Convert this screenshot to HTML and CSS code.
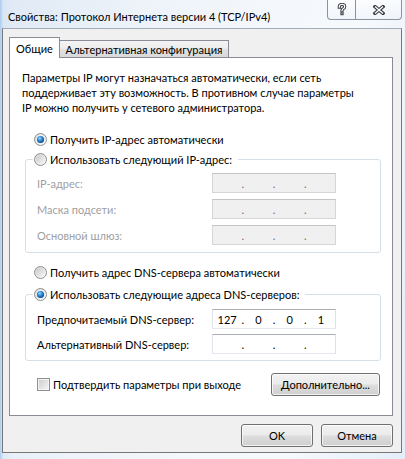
FILE: index.html
```html
<!DOCTYPE html>
<html lang="ru">
<head>
<meta charset="utf-8">
<title>Свойства: Протокол Интернета версии 4 (TCP/IPv4)</title>
<link rel="stylesheet" href="styles.css">
</head>
<body>
<div class="window">
  <div class="titlebar">
    <div class="title">Свойства: Протокол Интернета версии 4 (TCP/IPv4)</div>
    <div class="caption">
      <div class="cbtn help">
        <svg width="10" height="13" viewBox="0 0 10 13">
          <path d="M2.3 4.2 V3.4 Q2.3 1.4 5 1.4 Q7.7 1.4 7.7 3.4 Q7.7 4.9 6.2 5.7 Q5 6.3 5 7.4 V7.9" fill="none" stroke="#3a3d42" stroke-width="3.2" stroke-linecap="square"/>
          <rect x="3.4" y="9.4" width="3.2" height="2.8" fill="#3a3d42"/>
          <path d="M2.3 4.2 V3.4 Q2.3 1.4 5 1.4 Q7.7 1.4 7.7 3.4 Q7.7 4.9 6.2 5.7 Q5 6.3 5 7.4 V7.9" fill="none" stroke="#ffffff" stroke-width="1.2" stroke-linecap="square"/>
          <rect x="4.4" y="10.4" width="1.2" height="0.8" fill="#ffffff"/>
        </svg>
      </div>
      <div class="cbtn close">
        <svg width="12" height="10" viewBox="0 0 12 10">
          <path d="M2 1.6 L10 8.4 M10 1.6 L2 8.4" stroke="#3a3d42" stroke-width="3.4" stroke-linecap="square"/>
          <path d="M2 1.6 L10 8.4 M10 1.6 L2 8.4" stroke="#ffffff" stroke-width="1.3" stroke-linecap="butt"/>
        </svg>
      </div>
    </div>
  </div>

  <div class="client">
    <div class="tabs">
      <div class="tab active">Общие</div>
      <div class="tab inactive">Альтернативная конфигурация</div>
    </div>

    <div class="panel">
      <p class="intro">Параметры IP могут назначаться автоматически, если сеть<br>поддерживает эту возможность. В противном случае параметры<br>IP можно получить у сетевого администратора.</p>

      <div class="option first">
        <svg class="radio" width="13" height="13" viewBox="0 0 13 13"><circle cx="6.5" cy="6.5" r="6" fill="url(#radioBg)" stroke="#8e8f8f"/><circle cx="6.5" cy="6.5" r="4.2" fill="none" stroke="#f4f4f4" stroke-width="0.8"/><circle cx="6.5" cy="6.5" r="3.6" fill="url(#radioDot)"/></svg>
        <span>Получить IP-адрес автоматически</span>
      </div>

      <fieldset class="group ipgroup">
        <legend>
          <span class="option">
            <svg class="radio" width="13" height="13" viewBox="0 0 13 13"><circle cx="6.5" cy="6.5" r="6" fill="url(#radioBg)" stroke="#8e8f8f"/><circle cx="6.5" cy="6.5" r="4.6" fill="url(#radioInner)"/></svg>
            <span>Использовать следующий IP-адрес:</span>
          </span>
        </legend>
        <div class="field disabled">
          <span class="label">IP-адрес:</span>
          <div class="ip off"><span></span><span class="dot">.</span><span></span><span class="dot">.</span><span></span><span class="dot">.</span><span></span></div>
        </div>
        <div class="field disabled">
          <span class="label">Маска подсети:</span>
          <div class="ip off"><span></span><span class="dot">.</span><span></span><span class="dot">.</span><span></span><span class="dot">.</span><span></span></div>
        </div>
        <div class="field disabled">
          <span class="label">Основной шлюз:</span>
          <div class="ip off"><span></span><span class="dot">.</span><span></span><span class="dot">.</span><span></span><span class="dot">.</span><span></span></div>
        </div>
      </fieldset>

      <div class="option dnsauto">
        <svg class="radio" width="13" height="13" viewBox="0 0 13 13"><circle cx="6.5" cy="6.5" r="6" fill="url(#radioBg)" stroke="#8e8f8f"/><circle cx="6.5" cy="6.5" r="4.6" fill="url(#radioInner)"/></svg>
        <span>Получить адрес DNS-сервера автоматически</span>
      </div>

      <fieldset class="group dnsgroup">
        <legend>
          <span class="option">
            <svg class="radio" width="13" height="13" viewBox="0 0 13 13"><circle cx="6.5" cy="6.5" r="6" fill="url(#radioBg)" stroke="#8e8f8f"/><circle cx="6.5" cy="6.5" r="4.2" fill="none" stroke="#f4f4f4" stroke-width="0.8"/><circle cx="6.5" cy="6.5" r="3.6" fill="url(#radioDot)"/></svg>
            <span>Использовать следующие адреса DNS-серверов:</span>
          </span>
        </legend>
        <div class="field">
          <span class="label">Предпочитаемый DNS-сервер:</span>
          <div class="ip"><span>127</span><span class="dot">.</span><span>0</span><span class="dot">.</span><span>0</span><span class="dot">.</span><span>1</span></div>
        </div>
        <div class="field">
          <span class="label">Альтернативный DNS-сервер:</span>
          <div class="ip"><span></span><span class="dot">.</span><span></span><span class="dot">.</span><span></span><span class="dot">.</span><span></span></div>
        </div>
      </fieldset>

      <div class="panel-footer">
        <label class="check">
          <span class="checkbox"></span>
          <span>Подтвердить параметры при выходе</span>
        </label>
        <button class="btn more">Дополнительно...</button>
      </div>
    </div>

    <div class="actions">
      <button class="btn">OK</button>
      <button class="btn">Отмена</button>
    </div>
  </div>
</div>

<svg class="defs" width="0" height="0" aria-hidden="true">
  <defs>
    <linearGradient id="radioBg" x1="0" y1="0" x2="1" y2="1">
      <stop offset="0" stop-color="#d6d6d6"/>
      <stop offset="1" stop-color="#ffffff"/>
    </linearGradient>
    <linearGradient id="radioInner" x1="0" y1="0" x2="1" y2="1">
      <stop offset="0" stop-color="#c9c9c9"/>
      <stop offset="1" stop-color="#f7f7f7"/>
    </linearGradient>
    <radialGradient id="radioDot" cx="0.4" cy="0.35" r="0.75">
      <stop offset="0" stop-color="#9ad8ff"/>
      <stop offset="0.45" stop-color="#2a86d8"/>
      <stop offset="1" stop-color="#0b3868"/>
    </radialGradient>
  </defs>
</svg>
</body>
</html>
```

FILE: styles.css
```css
* {
  box-sizing: border-box;
}

html,
body {
  margin: 0;
  padding: 0;
}

body {
  width: 405px;
  height: 459px;
  overflow: hidden;
  font-family: Lato, "Liberation Sans", sans-serif;
  font-size: 11px;
  line-height: 15px;
  color: #000;
}

.window {
  width: 405px;
  height: 459px;
  display: flex;
  flex-direction: column;
  background:
    linear-gradient(90deg, rgba(150, 190, 235, 0.7) 0, rgba(200, 222, 244, 0.3) 3px, rgba(255, 255, 255, 0) 12px),
    linear-gradient(100deg, #dfe9f5 0%, #edf3f9 30%, #f4f7fb 55%, #f6f9fc 75%, #e4eef8 100%);
}

/* ---------- title bar ---------- */
.titlebar {
  flex: none;
  height: 28px;
  display: flex;
  justify-content: space-between;
  align-items: flex-start;
}

.title {
  padding: 9px 0 0 8px;
  white-space: nowrap;
}

.caption {
  display: flex;
  height: 20px;
  margin-right: 3px;
  border: 1px solid #8a929e;
  border-top: none;
  border-radius: 0 0 4px 4px;
  background: linear-gradient(rgba(255, 255, 255, 0.6), rgba(235, 241, 248, 0.4));
}

.cbtn {
  display: flex;
  align-items: center;
  justify-content: center;
}

.cbtn.help {
  width: 28px;
  border-right: 1px solid #8a929e;
}

.cbtn.close {
  width: 45px;
}

/* ---------- client area ---------- */
.client {
  flex: 1;
  display: flex;
  flex-direction: column;
  margin: 0 3px 6px 2px;
  padding: 8px 8px 5px 6px;
  border: 1px solid #777;
  border-top-color: #a4adb8;
  background: #f0f0f0;
}

.tabs {
  position: relative;
  z-index: 1;
  display: flex;
  align-items: flex-end;
  height: 21px;
  margin-bottom: -1px;
}

.tab {
  border: 1px solid #898c95;
  border-bottom: none;
  text-align: center;
  white-space: nowrap;
}

.tab.active {
  width: 51px;
  height: 21px;
  padding-top: 3px;
  background: #fff;
}

.tab.inactive {
  width: 169px;
  height: 17px;
  margin-bottom: 1px;
  padding-top: 1px;
  border-left: none;
  background: linear-gradient(#f4f4f4 0%, #ececec 50%, #e1e1e1 51%, #d9d9d9 100%);
}

.panel {
  height: 359px;
  display: flex;
  flex-direction: column;
  padding: 12px 11px 0 12px;
  border: 1px solid #898c95;
  background: #fff;
}

.intro {
  margin: 0;
  white-space: nowrap;
}

.option {
  display: flex;
  align-items: center;
  gap: 3px;
  height: 15px;
  white-space: nowrap;
}

.option.first {
  margin: 17px 0 0 12px;
}

.option.dnsauto {
  margin: 12px 0 0 12px;
}

.radio {
  flex: none;
  display: block;
}

.group {
  margin: 5px 0 0 3px;
  padding: 6px 0 7px 11px;
  min-width: 0;
  border: 1px solid #d5dfe5;
  border-radius: 3px;
}

.group legend {
  margin-left: -4px;
  padding: 0 6px 0 1px;
}

.dnsgroup {
  margin-top: 7px;
  padding-top: 7px;
  padding-bottom: 6px;
}

.field {
  display: grid;
  grid-template-columns: 175px 124px;
  align-items: center;
  height: 20px;
}

.field .label {
  white-space: nowrap;
}

.field + .field {
  margin-top: 5px;
}

.ipgroup .field + .field {
  margin-top: 6px;
}

.field.disabled .label {
  color: #a0a0a0;
}

.ip {
  height: 20px;
  display: grid;
  grid-template-columns: 1fr 3px 1fr 3px 1fr 3px 1fr;
  align-items: center;
  text-align: center;
  border: 1px solid;
  border-color: #abadb3 #dbdfe6 #e3e9ef #e2e3ea;
  background: #fff;
}

.ip.off {
  border-color: #c4c4c4 #d6d6d6 #d6d6d6 #d6d6d6;
  background: #f0f0f0;
  color: #6d6d6d;
}

.dot {
  display: block;
  text-align: center;
}

.panel-footer {
  display: flex;
  align-items: center;
  justify-content: space-between;
  margin-top: 12px;
}

.check {
  display: flex;
  align-items: center;
  gap: 3px;
  margin-left: 15px;
  white-space: nowrap;
}

.checkbox {
  width: 13px;
  height: 13px;
  border: 1px solid #8e8f8f;
  background: linear-gradient(135deg, #cbcbcb, #f6f6f6);
  box-shadow: inset 0 0 0 1px #f4f4f4;
}

.btn {
  width: 72px;
  height: 23px;
  padding: 0;
  font: inherit;
  color: #000;
  border: 1px solid #707070;
  border-radius: 3px;
  background: linear-gradient(#f2f2f2 0%, #ebebeb 48%, #dddddd 52%, #cfcfcf 100%);
  box-shadow: inset 0 0 0 1px rgba(255, 255, 255, 0.75);
}

.btn.more {
  width: 109px;
  margin-right: 1px;
}

.actions {
  display: flex;
  justify-content: flex-end;
  gap: 8px;
  margin-top: 8px;
}

.defs {
  display: block;
  width: 0;
  height: 0;
  overflow: hidden;
}
```
